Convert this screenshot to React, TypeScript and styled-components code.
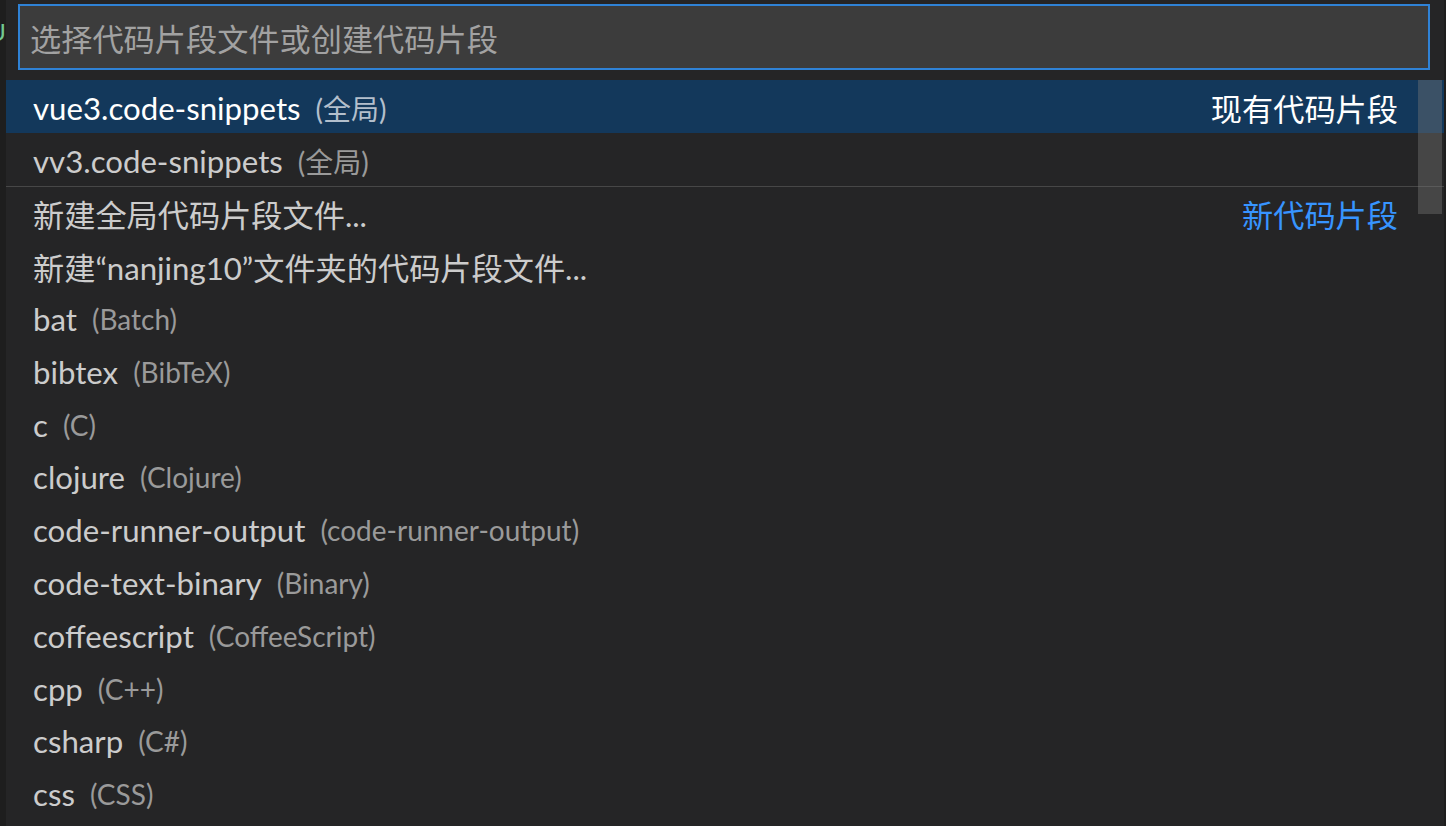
import styled, { createGlobalStyle } from 'styled-components';

const GlobalStyle = createGlobalStyle`
  html, body {
    margin: 0;
    padding: 0;
    background: #1e1e1e;
    overflow: hidden;
  }
  body {
    font-family: Lato, "Noto Sans CJK SC", sans-serif;
  }
`;

const Page = styled.div`
  display: flex;
  width: 1446px;
  height: 826px;
  overflow: hidden;
`;

const EditorEdge = styled.div`
  width: 6px;
  flex-shrink: 0;
  overflow: hidden;
  display: flex;
  flex-direction: column;
  align-items: flex-end;
  padding-top: 20px;
`;

const GitMark = styled.span`
  font-size: 24px;
  line-height: 24px;
  color: #73c991;
  white-space: nowrap;
`;

const Widget = styled.div`
  position: relative;
  width: 1438px;
  flex-shrink: 0;
  background: #252526;
  display: flex;
  flex-direction: column;
`;

const InputBar = styled.div`
  padding: 4px 14px 10px 12px;
`;

const Input = styled.input`
  box-sizing: border-box;
  width: 100%;
  height: 66px;
  background: #3c3c3c;
  border: 2px solid #2f82d6;
  outline: none;
  padding: 3px 10px 0;
  font-family: Lato, "Noto Sans CJK SC", sans-serif;
  font-size: 31.2px;
  color: #cccccc;

  &::placeholder {
    color: #a2a2a2;
  }
`;

const List = styled.div`
  position: relative;
  display: flex;
  flex-direction: column;
`;

const Row = styled.div<{ $selected?: boolean; $separator?: boolean }>`
  box-sizing: border-box;
  height: 52.8px;
  display: flex;
  align-items: center;
  padding: 3px 46px 0 27px;
  background: ${p => (p.$selected ? '#13385b' : 'transparent')};
  border-top: ${p => (p.$separator ? '1.5px solid #474747' : 'none')};
  font-size: 31.2px;
  white-space: nowrap;
`;

const Label = styled.span<{ $selected?: boolean }>`
  color: ${p => (p.$selected ? '#ffffff' : '#cccccc')};
`;

const Description = styled.span<{ $selected?: boolean }>`
  margin-left: 15px;
  font-size: 28px;
  color: ${p => (p.$selected ? '#b3bfcc' : '#9a9a9a')};
`;

const Detail = styled.span<{ $accent?: boolean; $selected?: boolean }>`
  margin-left: auto;
  font-size: 31.2px;
  color: ${p => (p.$accent ? '#3794ff' : p.$selected ? '#ffffff' : '#cccccc')};
`;

const Scrollbar = styled.div`
  position: absolute;
  top: 0;
  right: 2px;
  width: 24px;
  height: 134px;
  background: rgba(121, 121, 121, 0.4);
`;

type Item = {
  label: string;
  description?: string;
  detail?: string;
  accent?: boolean;
  separator?: boolean;
};

const items: Item[] = [
  { label: 'vue3.code-snippets', description: '(全局)', detail: '现有代码片段' },
  { label: 'vv3.code-snippets', description: '(全局)' },
  { label: '新建全局代码片段文件...', detail: '新代码片段', accent: true, separator: true },
  { label: '新建“nanjing10”文件夹的代码片段文件...' },
  { label: 'bat', description: '(Batch)' },
  { label: 'bibtex', description: '(BibTeX)' },
  { label: 'c', description: '(C)' },
  { label: 'clojure', description: '(Clojure)' },
  { label: 'code-runner-output', description: '(code-runner-output)' },
  { label: 'code-text-binary', description: '(Binary)' },
  { label: 'coffeescript', description: '(CoffeeScript)' },
  { label: 'cpp', description: '(C++)' },
  { label: 'csharp', description: '(C#)' },
  { label: 'css', description: '(CSS)' },
];

export default function App() {
  return (
    <>
      <GlobalStyle />
      <Page>
        <EditorEdge>
          <GitMark>U</GitMark>
        </EditorEdge>
        <Widget>
          <InputBar>
            <Input placeholder="选择代码片段文件或创建代码片段" />
          </InputBar>
          <List>
            {items.map((item, i) => {
              const selected = i === 0;
              return (
                <Row key={item.label} $selected={selected} $separator={item.separator}>
                  <Label $selected={selected}>{item.label}</Label>
                  {item.description && (
                    <Description $selected={selected}>{item.description}</Description>
                  )}
                  {item.detail && (
                    <Detail $accent={item.accent} $selected={selected}>
                      {item.detail}
                    </Detail>
                  )}
                </Row>
              );
            })}
            <Scrollbar />
          </List>
        </Widget>
      </Page>
    </>
  );
}
